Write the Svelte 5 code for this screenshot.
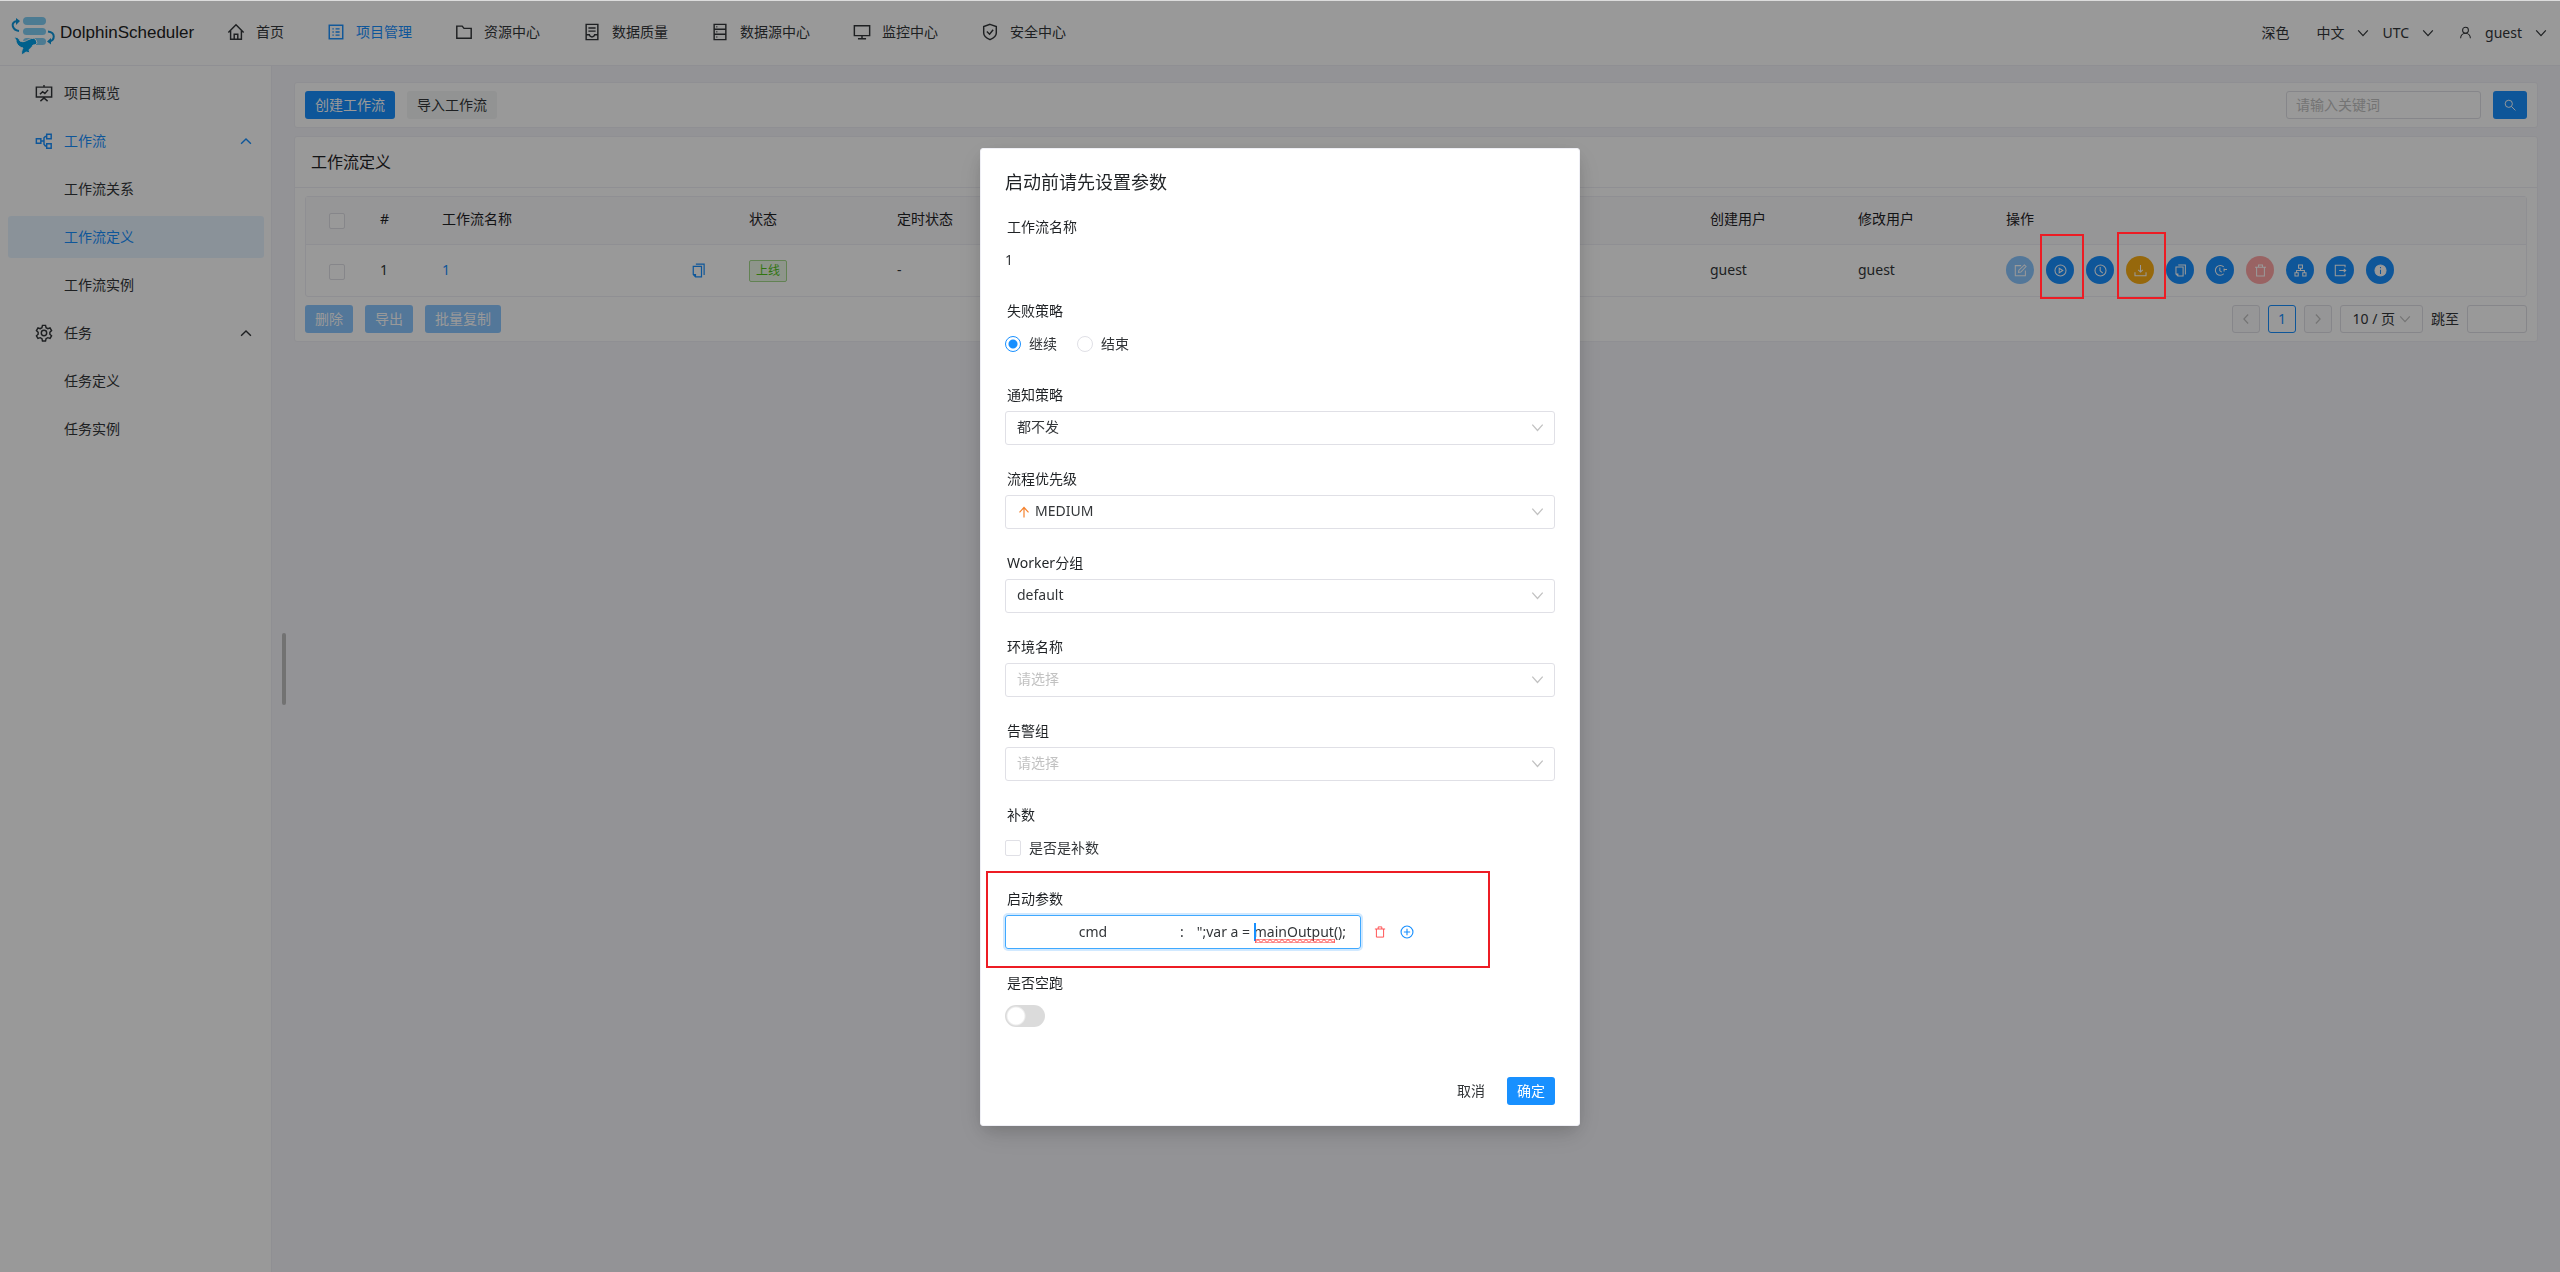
<script>
	const icons = {
		home: '<path d="M1.5 10.5 10 2l8.500 8.500M4 8.500V18h12V8.500M8 18v-5.500h4V18"/>',
		project: '<rect x="2.500" y="2.500" width="15" height="15"/><path d="M6 6.500h1.500M6 10h1.500M6 13.500h1.500M9.500 6.500H14M9.500 10H14M9.500 13.500H14"/>',
		folder: '<path d="M2 3.500h6l2 2.500h8v11H2z"/>',
		quality: '<path d="M3.500 1.500h13v17h-13zM6 5.500h8M6 9h8M3.500 13H7c.5 2 1.500 2.500 3 2.500s2.500-.5 3-2.500h3.500"/>',
		database: '<path d="M3.500 1.500h13v17h-13zM3.500 7h13M3.500 12.500h13M6 4.250h1M6 9.750h1M6 15.500h1"/>',
		monitor: '<path d="M1.500 3h17v11h-17zM10 14v3.500M5.500 17.500h9"/>',
		safety: '<path d="M10 1.500l7 2.500v7c0 3.500-3.500 6-7 7.500-3.500-1.500-7-4-7-7.500V4zM6.500 9.500l3 3 4-5"/>',
		board: '<path d="M1.500 3.500h17v11h-17zM10 1v2.500M10 14.500V17M6 19l4-3.500 4 3.500M5.500 11.500l3-3 2.500 2 3.500-4"/>',
		flow: '<path d="M1.500 7.500h5v5h-5zM13 2.500h5v5h-5zM13 13h5v5h-5zM6.500 10H10M13 5h-1.500L10 6.500v7l1.500 2H13"/>',
		gear: '<path d="M8.300 1.500h3.400l.6 2.600 1.900 1.100 2.500-.8 1.700 2.900-1.900 1.800v2.200l1.900 1.800-1.700 2.900-2.500-.8-1.900 1.100-.6 2.600H8.300l-.6-2.600-1.900-1.100-2.500.8-1.700-2.900 1.900-1.800V9.100L1.600 7.300l1.700-2.900 2.500.8 1.900-1.100z"/><circle cx="10" cy="10" r="3"/>',
		up: '<path d="M3 14l7-7 7 7"/>',
		down: '<path d="M2 5.500l8 9 8-9"/>',
		left: '<path d="M13.500 2.500L6.500 10l7 7.500"/>',
		right: '<path d="M6.500 2.500l7 7.500-7 7.500"/>',
		user: '<circle cx="10" cy="6.500" r="4.500"/><path d="M2.500 19c0-5 3.500-8 7.500-8s7.500 3 7.500 8"/>',
		search: '<circle cx="8" cy="8" r="6"/><path d="M12.500 12.500l6.500 6.500"/>',
		arrow: '<path d="M10 19V2.500M2.500 10.500L10 2.500l7.500 8"/>',
		copy: '<path d="M6.500 1.500h11V16M3 4.500h11v14H6L3 15.500zM3 15.500h3v3"/>',
		edit: '<path d="M11 2.500H2v15.500h15.500V10M7 13l.5-3.500L16 1.500l2.500 2.500-8 8.500z"/>',
		play: '<circle cx="10" cy="10" r="8.500"/><path d="M8 6.500v7l5.500-3.500z"/>',
		clock: '<circle cx="10" cy="10" r="8.500"/><path d="M9.500 4.500v6l4 3.500"/>',
		download: '<path d="M10 1.500V12M6.500 9l3.500 3.500L13.500 9M1.500 12.500v5.500h17v-5.500"/>',
		timer: '<path d="M15 15a7.500 7.500 0 1 1 0-10.500M9 5.500v5l3 2M15.500 7v4.500M15 8.500h5"/>',
		trash: '<path d="M1.500 5h17M7 5V1.500h6V5M4 5v13.500h12V5"/>',
		tree: '<path d="M7 1.500h6v5H7zM1.500 13.500h5v5h-5zM13.500 13.500h5v5h-5zM10 6.500v3.500M4 13.500V10h12v3.500"/>',
		export: '<path d="M17 5V2H2v16h15v-3M8 10h10M15 7.500l3 2.500-3 2.500"/>',
		info: '<circle cx="10" cy="10" r="8.500" fill="currentColor"/><path d="M10 9v6.500M10 4.500v2" stroke="#1890ff"/>',
		plus: '<circle cx="10" cy="10" r="8.500"/><path d="M10 5.500v9M5.500 10h9"/>'
	};

	const nav = [
		{ label: '首页', icon: 'home' },
		{ label: '项目管理', icon: 'project', active: true },
		{ label: '资源中心', icon: 'folder' },
		{ label: '数据质量', icon: 'quality' },
		{ label: '数据源中心', icon: 'database' },
		{ label: '监控中心', icon: 'monitor' },
		{ label: '安全中心', icon: 'safety' }
	];

	const menu = [
		{ label: '项目概览', icon: 'board' },
		{ label: '工作流', icon: 'flow', open: true, current: true },
		{ label: '工作流关系' },
		{ label: '工作流定义', active: true },
		{ label: '工作流实例' },
		{ label: '任务', icon: 'gear', open: true },
		{ label: '任务定义' },
		{ label: '任务实例' }
	];

	const actions = [
		{ icon: 'edit', title: '编辑', disabled: true },
		{ icon: 'play', title: '运行' },
		{ icon: 'clock', title: '定时' },
		{ icon: 'download', title: '下线', type: 'warning' },
		{ icon: 'copy', title: '复制工作流' },
		{ icon: 'timer', title: '定时管理' },
		{ icon: 'trash', title: '删除', type: 'error', disabled: true },
		{ icon: 'tree', title: '树形图' },
		{ icon: 'export', title: '导出' },
		{ icon: 'info', title: '版本信息' }
	];

	const selects = [
		{ id: 'warning-type', label: '通知策略', value: '都不发' },
		{ id: 'priority', label: '流程优先级', value: 'MEDIUM', icon: 'arrow' },
		{ id: 'worker-group', label: 'Worker分组', value: 'default' },
		{ id: 'environment', label: '环境名称', value: '请选择', empty: true },
		{ id: 'alert-group', label: '告警组', value: '请选择', empty: true }
	];

	let failure = $state('continue');
	let complement = $state(false);
	let dryRun = $state(false);
	let prop = $state('cmd');
	let value = $state('";var a = mainOutput();');
</script>

{#snippet icon(name, size = 14)}
	<svg class="icon {name}" width={size} height={size} viewBox="0 0 20 20" aria-hidden="true">{@html icons[name]}</svg>
{/snippet}

<div class="page">
	<header>
		<a class="logo" href="#home">
			<svg width="46" height="42" viewBox="0 0 46 42" aria-hidden="true">
				<g fill="#7fcdf4">
					<rect x="13" y="3" width="23" height="8" rx="4" />
					<rect x="13" y="14" width="23" height="7" rx="3.500" />
					<rect x="13" y="24" width="23" height="7" rx="3.500" />
				</g>
				<g fill="none" stroke="#0e97dc" stroke-width="2">
					<path d="M9 17C2 16 0 8 7 7" />
					<path d="M38 17.500c8 1 7 9 1 10" />
				</g>
				<path fill="#0e97dc" d="M6 4l4 3-4 4zM41 24l-4 3.500 4 3z" />
				<path
					fill="#00a0e9" stroke="#fff" stroke-width="1"
					d="M4 23c3 0 5 1 6 4 4 2 7-1 10-2 2-1 5-1 6 1l1 3c-1 2-3 2-4 2-1 3-4 4-4 5l1 3-4-1-4 3c-1-3 0-5 1-7-4-1-7-4-7-8z"
				/>
			</svg>
			<span>DolphinScheduler</span>
		</a>
		<nav>
			{#each nav as item}
				<a href="#nav" class:active={item.active}>{@render icon(item.icon, 20)}{item.label}</a>
			{/each}
		</nav>
		<div class="tools">
			<button class="plain theme">深色</button>
			<button class="plain locale">中文 {@render icon('down', 12)}</button>
			<button class="plain zone">UTC {@render icon('down', 12)}</button>
			<button class="plain account">{@render icon('user', 13)}<span>guest</span>{@render icon('down', 12)}</button>
		</div>
	</header>

	<div class="body">
		<aside>
			{#each menu as item}
				<a href="#menu" class:active={item.active} class:current={item.current}>
					<span class="slot">{#if item.icon}{@render icon(item.icon, 18)}{/if}</span>
					<span class="name">{item.label}</span>
					{#if item.open}{@render icon('up', 14)}{/if}
				</a>
			{/each}
		</aside>
		<button class="collapse" aria-label="收起菜单"></button>

		<main>
			<section class="card toolbar">
				<button class="btn primary">创建工作流</button>
				<button class="btn soft">导入工作流</button>
				<input class="search-box" type="text" placeholder="请输入关键词" aria-label="请输入关键词" />
				<button class="btn primary find" aria-label="搜索">{@render icon('search', 12)}</button>
			</section>

			<section class="card">
				<h2>工作流定义</h2>
				<div class="content">
					<div class="table">
						<table>
							<colgroup>
								<col class="c-check" />
								<col class="c-index" />
								<col class="c-name" />
								<col class="c-cell" />
								<col class="c-cell" />
								<col />
								<col class="c-cell" />
								<col class="c-cell" />
								<col class="c-action" />
							</colgroup>
							<thead>
								<tr>
									<th class="center"><input type="checkbox" aria-label="全选" /></th>
									<th>#</th>
									<th>工作流名称</th>
									<th>状态</th>
									<th>定时状态</th>
									<th></th>
									<th>创建用户</th>
									<th>修改用户</th>
									<th>操作</th>
								</tr>
							</thead>
							<tbody>
								<tr>
									<td class="center"><input type="checkbox" aria-label="选择" /></td>
									<td>1</td>
									<td>
										<div class="name-cell">
											<a href="#definition">1</a>
											<button class="plain" aria-label="复制名称">{@render icon('copy', 15)}</button>
										</div>
									</td>
									<td><span class="tag">上线</span></td>
									<td>-</td>
									<td></td>
									<td>guest</td>
									<td>guest</td>
									<td>
										<div class="actions">
											{#each actions as action}
												<button class="round {action.type ?? ''}" disabled={action.disabled} aria-label={action.title}>
													{@render icon(action.icon, 13)}
												</button>
											{/each}
										</div>
									</td>
								</tr>
							</tbody>
						</table>
					</div>
					<div class="foot">
						<button class="btn primary" disabled>删除</button>
						<button class="btn primary" disabled>导出</button>
						<button class="btn primary" disabled>批量复制</button>
						<div class="pager">
							<button class="cell off" aria-label="上一页">{@render icon('left', 12)}</button>
							<button class="cell on">1</button>
							<button class="cell off" aria-label="下一页">{@render icon('right', 12)}</button>
							<div class="cell size">
								<select aria-label="每页条数"><option>10 / 页</option></select>
								{@render icon('down', 12)}
							</div>
							<label for="jump">跳至</label>
							<input id="jump" class="cell jump" type="text" />
						</div>
					</div>
				</div>
			</section>
		</main>
	</div>
</div>

<div class="mask">
	<div class="mark run"></div>
	<div class="mark offline"></div>

	<form class="modal" role="dialog" aria-labelledby="modal-title">
		<h1 id="modal-title">启动前请先设置参数</h1>

		<div class="field">
			<span class="label">工作流名称</span>
			<div class="line">1</div>
		</div>

		<div class="field">
			<span class="label">失败策略</span>
			<div class="line radios">
				<label><input type="radio" value="continue" bind:group={failure} />继续</label>
				<label><input type="radio" value="end" bind:group={failure} />结束</label>
			</div>
		</div>

		{#each selects as field}
			<div class="field">
				<label class="label" for={field.id}>{field.label}</label>
				<div class="select" class:empty={field.empty}>
					{#if field.icon}<span class="level">{@render icon(field.icon, 12)}</span>{/if}
					<select id={field.id}><option>{field.value}</option></select>
					{@render icon('down', 13)}
				</div>
			</div>
		{/each}

		<div class="field">
			<span class="label">补数</span>
			<div class="line">
				<label><input type="checkbox" bind:checked={complement} />是否是补数</label>
			</div>
		</div>

		<div class="field params">
			<label class="label" for="param-prop">启动参数</label>
			<div class="line">
				<div class="pair">
					<input id="param-prop" type="text" bind:value={prop} />
					<span>:</span>
					<div class="value">
						<input type="text" bind:value aria-label="值" />
						<i class="caret"></i>
						<svg class="squiggle" width="80" height="4" aria-hidden="true">
							<defs>
								<pattern id="wave" width="6" height="4" patternUnits="userSpaceOnUse">
									<path d="M0 3.500L3 .5l3 3" />
								</pattern>
							</defs>
							<rect width="80" height="4" fill="url(#wave)" />
						</svg>
					</div>
				</div>
				<button type="button" class="plain remove" aria-label="删除">{@render icon('trash', 12)}</button>
				<button type="button" class="plain add" aria-label="添加">{@render icon('plus', 14)}</button>
			</div>
		</div>

		<div class="field">
			<label class="label" for="dry-run">是否空跑</label>
			<div class="line">
				<input id="dry-run" class="switch" type="checkbox" role="switch" bind:checked={dryRun} />
			</div>
		</div>

		<footer>
			<button type="button" class="plain">取消</button>
			<button type="button" class="btn primary">确定</button>
		</footer>
	</form>
</div>

<style>
	:global(body) {
		margin: 0;
		color: #333639;
		background: #f5f5fa;
		font: 14px/22px "Noto Sans", "Noto Sans CJK SC", sans-serif;
	}

	*,
	*::before {
		box-sizing: border-box;
	}

	a {
		color: inherit;
		text-decoration: none;
	}

	button,
	input,
	select {
		margin: 0;
		padding: 0;
		border: 0;
		outline: none;
		color: inherit;
		background: none;
		font: inherit;
	}

	input::placeholder {
		color: #c2c2c2;
		opacity: 1;
	}

	select {
		appearance: none;
	}

	.icon {
		display: block;
		flex: none;
		fill: none;
		stroke: currentColor;
		stroke-width: 1.6;
	}

	.up,
	.down,
	.left,
	.right,
	.arrow {
		stroke-width: 2;
	}

	.plain {
		display: flex;
		align-items: center;
	}

	.page {
		display: flex;
		flex-direction: column;
		min-height: 100vh;
	}

	/* Header */
	header {
		display: flex;
		align-items: center;
		height: 66px;
		padding: 0 13px 0 10px;
		border-bottom: 1px solid #efeff5;
		background: #fff;
	}

	.logo {
		display: flex;
		align-items: center;
		gap: 4px;
		width: 216px;
		color: #222;
		font-family: "Liberation Sans", sans-serif;
		font-size: 17px;
	}

	.logo svg {
		margin-top: 4px;
	}

	nav {
		display: flex;
		gap: 42px;
		padding-bottom: 1px;
	}

	nav a {
		display: flex;
		align-items: center;
		gap: 10px;
	}

	nav .icon {
		width: 20px;
		height: 18px;
	}

	.tools {
		display: flex;
		align-items: center;
		margin-left: auto;
	}

	.locale,
	.zone,
	.account {
		gap: 13px;
	}

	.locale {
		margin: 0 13px 0 27px;
	}

	.account {
		margin-left: 25px;
	}

	.active,
	.current {
		color: #1890ff;
	}

	/* Side menu */
	.body {
		display: flex;
		flex: 1;
	}

	aside {
		display: flex;
		flex-direction: column;
		gap: 6px;
		width: 272px;
		padding: 6px 7px 6px 8px;
		border-right: 1px solid #efeff5;
		background: #fff;
	}

	aside a {
		display: flex;
		align-items: center;
		height: 42px;
		padding: 0 11px 0 27px;
		border-radius: 3px;
	}

	aside a.active {
		background: #e7f4ff;
	}

	.slot {
		width: 29px;
	}

	.name {
		flex: 1;
	}

	.collapse {
		align-self: center;
		width: 4px;
		height: 72px;
		margin: 0 9px 0 10px;
		border-radius: 2px;
		background: #bfbfbf;
	}

	/* Content */
	main {
		display: flex;
		flex: 1;
		flex-direction: column;
		gap: 8px;
		margin-left: -1px;
		padding: 16px 22px 16px 0;
	}

	.card {
		border: 1px solid #efeff5;
		border-radius: 3px;
		background: #fff;
	}

	.toolbar {
		display: flex;
		gap: 12px;
		padding: 8px 10px;
	}

	.btn {
		height: 28px;
		padding: 0 10px;
		border-radius: 3px;
	}

	.primary {
		color: #fff;
		background: #1890ff;
	}

	.soft {
		background: #f4f6f6;
	}

	button:disabled {
		opacity: 0.5;
	}

	.search-box {
		width: 195px;
		margin-left: auto;
		padding: 0 9px;
		border: 1px solid #e0e0e6;
		border-radius: 3px;
	}

	.find {
		width: 34px;
		padding: 0 11px;
	}

	h2 {
		margin: 0;
		padding: 14px 16px;
		border-bottom: 1px solid #efeff5;
		color: #1f2225;
		font-size: 16px;
		font-weight: 400;
	}

	.content {
		padding: 8px 10px;
	}

	.table {
		border: 1px solid #efeff5;
		border-radius: 3px;
	}

	table {
		width: 100%;
		border-collapse: collapse;
		table-layout: fixed;
	}

	.c-check,
	.c-index {
		width: 62px;
	}

	.c-name {
		width: 307px;
	}

	.c-cell {
		width: 148px;
	}

	.c-action {
		width: 532px;
	}

	th,
	td {
		padding: 0 12px;
		text-align: left;
		font-weight: 400;
	}

	th {
		height: 47px;
		padding-bottom: 2px;
		border-bottom: 1px solid #efeff5;
		color: #1f2225;
		background: #fafafc;
	}

	td {
		height: 52px;
	}

	.center {
		text-align: center;
	}

	input[type="checkbox"],
	input[type="radio"] {
		appearance: none;
		width: 16px;
		height: 16px;
		border: 1px solid #e0e0e6;
		border-radius: 2px;
		background: #fff;
		vertical-align: middle;
	}

	input[type="radio"] {
		border-radius: 50%;
	}

	input[type="radio"]:checked {
		border-color: #1890ff;
		background: radial-gradient(circle, #1890ff 4px, #fff 5px);
	}

	.name-cell {
		display: flex;
		align-items: center;
		justify-content: space-between;
		padding-right: 19px;
		color: #1890ff;
	}

	.tag {
		display: inline-block;
		padding: 0 6px;
		border: 1px solid #a3d98b;
		border-radius: 2px;
		color: #52c41a;
		background: #edf9e8;
		font-size: 12px;
		line-height: 20px;
	}

	.actions {
		display: flex;
		gap: 12px;
	}

	.round {
		display: flex;
		align-items: center;
		justify-content: center;
		width: 28px;
		height: 28px;
		border-radius: 50%;
		color: #fff;
		background: #1890ff;
	}

	.round.warning {
		background: #faad14;
	}

	.round.error {
		background: #ff4d4f;
	}

	.foot {
		display: flex;
		gap: 12px;
		margin-top: 8px;
	}

	.pager {
		display: flex;
		align-items: center;
		gap: 8px;
		margin-left: auto;
	}

	.cell {
		display: flex;
		align-items: center;
		justify-content: center;
		width: 28px;
		height: 28px;
		border: 1px solid #e0e0e6;
		border-radius: 3px;
	}

	.cell.off {
		color: #c2c2c2;
		background: #fafafc;
	}

	.cell.on {
		border-color: #1890ff;
		color: #1890ff;
	}

	.cell.size {
		gap: 3px;
		width: 83px;
	}

	.size .icon {
		color: #c2c2c2;
	}

	.cell.jump {
		width: 60px;
	}

	/* Overlay */
	.mask {
		position: fixed;
		inset: 0;
		display: flex;
		align-items: center;
		justify-content: center;
		border-top: 1px solid #dcdcdc;
		background: rgba(0, 0, 0, 0.4);
	}

	.mark,
	.params::before {
		position: absolute;
		border: 2px solid #ed1c24;
	}

	.mark.run {
		top: 233px;
		right: 476px;
		width: 44px;
		height: 65px;
	}

	.mark.offline {
		top: 231px;
		right: 394px;
		width: 49px;
		height: 67px;
	}

	.modal {
		width: 600px;
		padding: 19px 24px 20px;
		border: 1px solid #efeff5;
		border-radius: 3px;
		background: #fff;
		box-shadow: 0 6px 16px -4px rgba(0, 0, 0, 0.16), 0 9px 28px rgba(0, 0, 0, 0.1);
	}

	h1 {
		margin: 0 0 21px;
		color: #1f2225;
		font-size: 18px;
		font-weight: 400;
		line-height: 28px;
	}

	.field {
		position: relative;
		padding-bottom: 24px;
	}

	.label {
		display: block;
		height: 26px;
		padding-left: 2px;
		color: #1f2225;
		line-height: 20px;
	}

	.line {
		display: flex;
		align-items: center;
		height: 34px;
	}

	.line label {
		display: flex;
		align-items: center;
		gap: 8px;
	}

	.radios {
		gap: 20px;
	}

	.select {
		display: flex;
		align-items: center;
		height: 34px;
		padding: 0 10px 0 11px;
		border: 1px solid #e0e0e6;
		border-radius: 3px;
	}

	.select select {
		flex: 1;
		padding-bottom: 2px;
	}

	.select > .icon,
	.select.empty {
		color: #c2c2c2;
	}

	.level {
		margin: 0 5px 0 1px;
		color: #f5822d;
	}

	/* Startup parameters */
	.params::before {
		content: "";
		top: -18px;
		left: -19px;
		width: 504px;
		height: 97px;
	}

	.pair {
		display: flex;
		align-items: center;
		width: 356px;
		height: 34px;
		border: 1px solid #40a9ff;
		border-radius: 3px;
		box-shadow: 0 0 0 2px rgba(24, 144, 255, 0.2);
	}

	.pair > input {
		width: 174px;
		text-align: center;
	}

	.value {
		position: relative;
		margin-left: 13px;
	}

	.value input {
		width: 155px;
	}

	.caret {
		position: absolute;
		top: 2px;
		left: 57px;
		width: 2px;
		height: 18px;
		background: #1890ff;
	}

	.squiggle {
		position: absolute;
		top: 18px;
		left: 58px;
		fill: none;
		stroke: #f33;
	}

	.remove {
		margin: 0 14px 0 13px;
		color: #ff4d4f;
	}

	.add {
		color: #1890ff;
	}

	input.switch {
		width: 40px;
		height: 22px;
		border: 0;
		border-radius: 11px;
		background: radial-gradient(circle at 11px 11px, #fff 8px, #dbdbdb 10px);
	}

	.switch:checked {
		background: radial-gradient(circle at 29px 11px, #fff 8px, #1890ff 10px);
	}

	footer {
		display: flex;
		justify-content: flex-end;
		gap: 22px;
		margin-top: 20px;
	}
</style>
